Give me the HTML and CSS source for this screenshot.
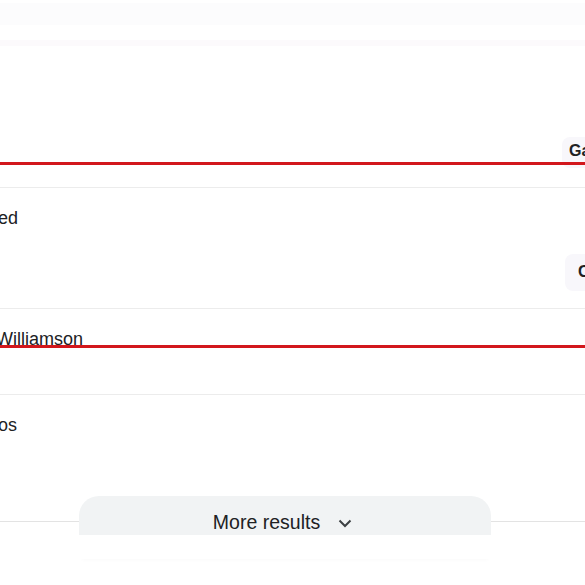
FILE: index.html
```html
<!DOCTYPE html>
<html>
<head>
<meta charset="utf-8">
<link rel="stylesheet" href="styles.css">
</head>
<body>
<div class="page">
  <div class="top-band"></div>
  <div class="top-line"></div>
  <div class="header">
    <div class="chip chip-ga">Ga</div>
  </div>
  <div class="row row-1">
    <div class="title title-ed">Related</div>
    <div class="chip chip-c">C</div>
  </div>
  <div class="row row-2">
    <div class="title title-w">Williamson</div>
  </div>
  <div class="row row-3">
    <div class="title title-os">Photos</div>
  </div>
  <div class="more-row">
    <div class="rule rule-left"></div>
    <div class="more-wrap">
      <div class="more-btn">
        <span class="more-text">More results</span>
        <svg class="chev" width="16" height="16" viewBox="0 0 16 16"><path d="M2.5 5.5 L8 11 L13.5 5.5" fill="none" stroke="#3c4043" stroke-width="2"/></svg>
      </div>
      <div class="more-foot"></div>
    </div>
    <div class="rule rule-right"></div>
  </div>
  <div class="mark mark-1"></div>
  <div class="mark mark-2"></div>
</div>
</body>
</html>
```
FILE: styles.css
```css
html, body {
  margin: 0;
  padding: 0;
  background: #ffffff;
}
body {
  width: 585px;
  height: 585px;
  overflow: hidden;
  font-family: "Liberation Sans", Arial, sans-serif;
  color: #202124;
}
.page {
  position: relative;
  width: 585px;
  height: 585px;
  overflow: hidden;
}
.top-band {
  margin-top: 3px;
  height: 22px;
  background: #fcfcfd;
}
.top-line {
  margin-top: 15px;
  height: 6px;
  background: #fcfafc;
}
.header {
  height: 141px;
  border-bottom: 1px solid #ececec;
  display: flex;
  justify-content: flex-end;
  align-items: flex-start;
}
.chip {
  background: #f8f7fb;
  font-weight: bold;
  font-size: 16px;
  line-height: 20px;
  color: #202124;
  border-radius: 8px 0 0 8px;
  white-space: nowrap;
  overflow: hidden;
}
.chip-ga {
  margin-top: 91px;
  width: 16px;
  padding: 4px 0 7px 7px;
}
.row {
  border-bottom: 1px solid #ececec;
  display: flex;
  justify-content: space-between;
  align-items: flex-start;
}
.title {
  font-size: 18px;
  line-height: 24px;
  padding-top: 18px;
  white-space: nowrap;
}
.row-1 {
  height: 120px;
}
.title-ed {
  margin-left: -44px;
}
.chip-c {
  margin-top: 66px;
  width: 7px;
  padding: 8px 0 9px 13px;
}
.row-2 {
  height: 85px;
}
.title-w {
  margin-left: -4px;
}
.row-3 {
  height: 101px;
  border-bottom: none;
}
.title-os {
  margin-left: -39px;
}
.more-row {
  display: flex;
  align-items: flex-start;
}
.rule {
  height: 1px;
  margin-top: 25px;
  background: #e3e3e3;
}
.rule-left {
  width: 79px;
}
.rule-right {
  flex: 1;
}
.more-wrap {
  width: 412px;
}
.more-btn {
  height: 39px;
  background: #f1f3f4;
  border-radius: 20px 20px 0 0;
  display: flex;
  justify-content: center;
  align-items: flex-start;
  gap: 17px;
  padding-top: 15px;
  padding-right: 4px;
  box-sizing: border-box;
}
.more-text {
  font-size: 19.5px;
  line-height: 22px;
  color: #202124;
}
.chev {
  margin-top: 4px;
}
.more-foot {
  height: 24px;
  background: #ffffff;
  box-shadow: 0 4px 4px -3px rgba(0, 0, 0, 0.025);
}
.mark {
  position: absolute;
  left: 0;
  right: 0;
  height: 3px;
  background: #d2171c;
}
.mark-1 {
  top: 162px;
}
.mark-2 {
  top: 345px;
}
```
